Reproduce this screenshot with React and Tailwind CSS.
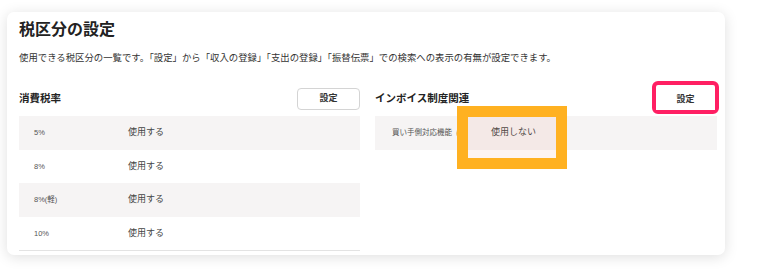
const RATES = ['5%', '8%', '8%(軽)', '10%'];

export default function App() {
  return (
    <div className="w-[769px] h-[276px] bg-white pt-[12px] pl-[7px] font-['Liberation_Sans','Noto_Sans_CJK_JP',sans-serif] text-[#333]">
      <div className="relative w-[718px] h-[243px] rounded-[7px] bg-white shadow-[0_2px_14px_rgba(0,0,0,0.13)] pl-[12px] pt-[8px]">
        <h1 className="text-[16px] leading-[20px] font-bold text-[#222]">税区分の設定</h1>
        <p className="mt-[11px] text-[9.4px] leading-[14px] text-[#333]">
          使用できる税区分の一覧です。「設定」から「収入の登録」「支出の登録」「振替伝票」での検索への表示の有無が設定できます。
        </p>

        <div className="mt-[23px] flex gap-[15px]">
          {/* 消費税率 */}
          <div className="w-[341px]">
            <div className="flex items-center justify-between h-[22px] mb-[6px]">
              <span className="text-[10.5px] font-bold text-[#222]">消費税率</span>
              <button className="w-[63px] h-[22px] rounded-[4px] border border-[#d4d4d4] bg-white text-[9px] font-bold text-[#333]">
                設定
              </button>
            </div>
            <div className="border-b border-[#e3e3e3]">
              {RATES.map((r, i) => (
                <div
                  key={r}
                  className={`flex items-center h-[33.5px] ${i % 2 === 0 ? 'bg-[#f6f4f4]' : 'bg-white'}`}
                >
                  <span className="w-[109px] pl-[15px] text-[7.5px] text-[#555]">{r}</span>
                  <span className="text-[9px] text-[#444]">使用する</span>
                </div>
              ))}
            </div>
          </div>

          {/* インボイス制度関連 */}
          <div className="w-[342px]">
            <div className="flex items-center justify-between h-[22px] mb-[6px]">
              <span className="text-[10.5px] font-bold text-[#222]">インボイス制度関連</span>
              <div className="-mt-[3px] mr-[-2px] rounded-[6px] border-[4px] border-[#ff1f63]">
                <button className="w-[59px] h-[22px] bg-white text-[9px] font-bold text-[#333]">設定</button>
              </div>
            </div>
            <div className="flex items-center h-[34px] bg-[#f6f4f4]">
              <span className="pl-[17px] text-[7.5px] text-[#555]">買い手側対応機能</span>
              <span className="ml-[4px] w-[9px] h-[9px] rounded-full bg-[#e8c48a] text-white text-[6px] leading-[9px] text-center">?</span>
              <span className="ml-[26px] text-[9px] text-[#444]">使用しない</span>
            </div>
          </div>
        </div>

        <div className="absolute left-[450px] top-[94px] w-[110px] h-[63px] border-[11px] border-[#ffb121] bg-[rgba(230,120,90,0.08)]" />
      </div>
    </div>
  );
}
